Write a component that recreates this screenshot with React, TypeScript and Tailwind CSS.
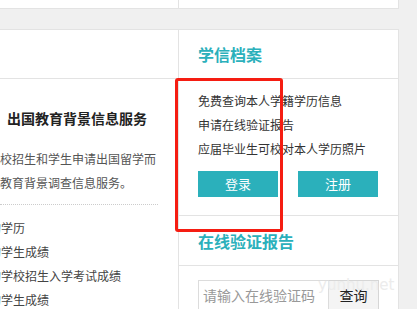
import React from 'react';

const leftItems = ['的学历', '的学生成绩', '的学校招生入学考试成绩', '的学生成绩'];
const archiveLinks = ['免费查询本人学籍学历信息', '申请在线验证报告', '应届毕业生可校对本人学历照片'];

export default function App() {
  return (
    <div className="relative w-[417px] h-[309px] overflow-hidden bg-[#f0f0f0] font-['Noto_Sans_CJK_SC',sans-serif] text-[#333]">
      {/* 上一块的底部 */}
      <div className="flex w-[399px] h-[9px]">
        <div className="w-[178px] bg-white border-b border-[#e3e3e3]" />
        <div className="w-[221px] bg-white border-x border-b border-[#e3e3e3]" />
      </div>

      <div className="h-[20px]" />

      <div className="flex w-[399px] items-start">
        {/* 左侧：出国教育背景信息服务 */}
        <div className="w-[178px] h-[300px] bg-white border-t border-[#e3e3e3] overflow-hidden">
          <div className="h-[49px] border-b border-[#e3e3e3]" />
          <div className="pt-[29px]">
            <h3 className="pl-[7px] text-[14px] leading-[20px] font-bold text-[#222]">出国教育背景信息服务</h3>
            <div className="mt-[19px] ml-[-24px] text-[12px] leading-[24px] text-[#555] whitespace-nowrap">
              <p>外院校招生和学生申请出国留学而</p>
              <p>供的教育背景调查信息服务。</p>
            </div>
            <div className="mt-[9px] w-[158px] border-b border-dotted border-[#cccccc]" />
            <ul className="mt-[11px] ml-[-11px] text-[12px] leading-[24px] text-[#444] whitespace-nowrap">
              {leftItems.map((item, i) => (
                <li key={i}>{item}</li>
              ))}
            </ul>
          </div>
        </div>

        {/* 右侧：学信档案 */}
        <div className="w-[221px] bg-white border-x border-t border-[#e3e3e3]">
          <div className="h-[49px] border-b border-[#e3e3e3] pl-[19px] flex items-center">
            <h2 className="text-[16px] font-bold text-[#2bb0bb]">学信档案</h2>
          </div>
          <div className="pl-[19px] pt-[10px] pb-[18px] border-b border-[#e3e3e3]">
            <ul className="text-[12px] leading-[24px] text-[#333] whitespace-nowrap">
              {archiveLinks.map((link) => (
                <li key={link}>{link}</li>
              ))}
            </ul>
            <div className="mt-[10px] flex gap-[20px]">
              <button className="w-[80px] h-[26px] bg-[#2bb0bb] text-white text-[13px]">登录</button>
              <button className="w-[80px] h-[26px] bg-[#2bb0bb] text-white text-[13px]">注册</button>
            </div>
          </div>
          <div className="h-[50px] border-b border-[#e3e3e3] pl-[19px] flex items-center">
            <h2 className="text-[16px] font-bold text-[#2bb0bb]">在线验证报告</h2>
          </div>
          <div className="pl-[19px] pt-[14px] pb-[20px] flex">
            <input
              className="w-[131px] h-[30px] border border-[#dcdcdc] px-[4px] text-[14px] placeholder:text-[#999] outline-none"
              placeholder="请输入在线验证码"
            />
            <button className="w-[50px] h-[30px] border border-l-0 border-[#d6d6d6] bg-[#f4f4f4] text-[14px] text-[#222]">查询</button>
          </div>
        </div>
      </div>

      {/* 水印 */}
      <div className="absolute left-[318px] top-[276px] text-[15px] leading-[18px] text-[#ececec] font-['DejaVu_Sans',sans-serif] pointer-events-none">
        yunhu.net
      </div>

      {/* 红色标注框 */}
      <div className="absolute left-[175px] top-[78px] w-[108px] h-[154px] border-[3px] border-[#f51d12] rounded-[3px] pointer-events-none" />
    </div>
  );
}
